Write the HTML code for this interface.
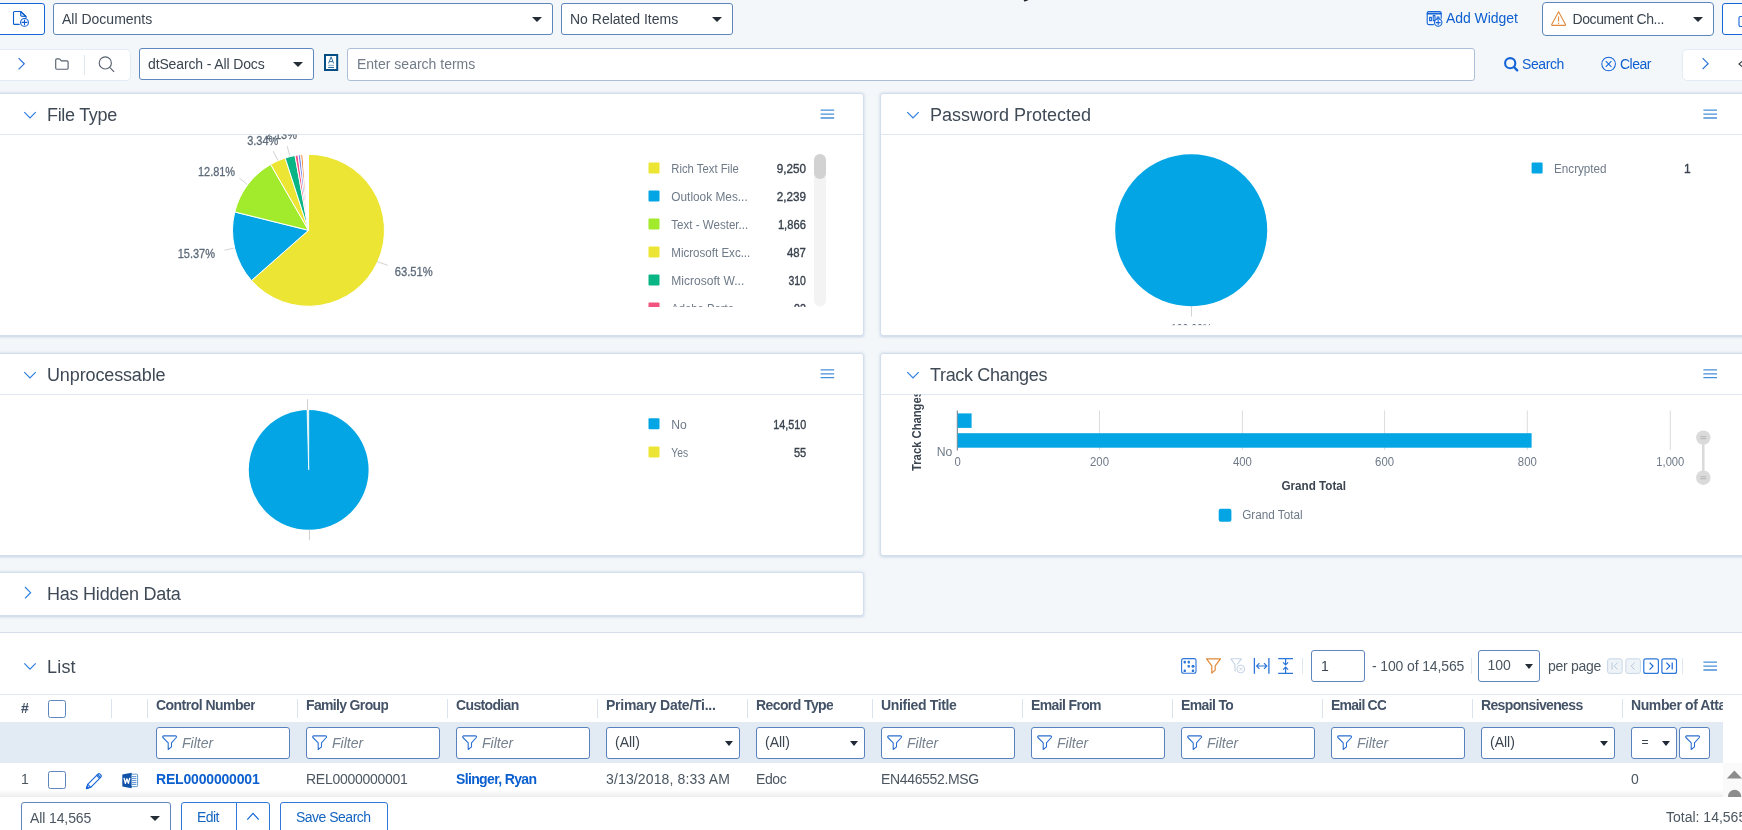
<!DOCTYPE html>
<html>
<head>
<meta charset="utf-8">
<title>Documents</title>
<style>
*{box-sizing:border-box;margin:0;padding:0}
html,body{width:1742px;height:830px;overflow:hidden;background:#f3f7fa;font-family:"Liberation Sans",sans-serif;font-size:14px;color:#3b4550}
.a{position:absolute}
.sel{position:absolute;background:#fff;border:1px solid #5c86bc;border-radius:3px;height:32px;line-height:30px;padding-left:8px;white-space:nowrap;overflow:hidden;color:#3b4550}
.sel .car{position:absolute;top:13px;width:0;height:0;border-left:5px solid transparent;border-right:5px solid transparent;border-top:5px solid #242c36}
.lnk{color:#1565c0}
.w{position:absolute;background:#fff;border:1px solid #d3dfec;border-radius:3px;box-shadow:0 .5px 3px rgba(90,125,170,.3)}
.w .hd{position:absolute;left:0;right:0;top:0;height:41px;border-bottom:1px solid #dfe8f1}
.ttl{position:absolute;font-size:18px;line-height:22px;color:#3f4a56;white-space:nowrap}
.ct{position:absolute;font-size:11.6px;color:#6e7a88;white-space:nowrap;line-height:14px}
.cv{position:absolute;font-size:12px;color:#39424d;white-space:nowrap;line-height:14px;text-align:right}
.sq{position:absolute;width:11px;height:11px;border-radius:1px}
.th{position:absolute;top:697px;font-weight:700;font-size:14px;line-height:16px;color:#435266;white-space:nowrap;overflow:hidden}
.dv{position:absolute;top:699px;width:1px;height:19px;background:#dbe4ee}
.fi{position:absolute;top:727px;height:32px;background:#fff;border:1px solid #5882bd;border-radius:3px;line-height:30px;white-space:nowrap;overflow:hidden}
.fi i{position:absolute;left:25px;top:0;font-style:italic;color:#76828f;font-size:14px}
.fi svg{position:absolute;left:5px;top:7px}
.fs{position:absolute;top:727px;height:32px;background:#fff;border:1px solid #5882bd;border-radius:3px;line-height:29px;padding-left:8px;white-space:nowrap;color:#3b4550}
.fs .car{position:absolute;top:13px;width:0;height:0;border-left:4px solid transparent;border-right:4px solid transparent;border-top:5px solid #1f2a36}
.td{position:absolute;top:771px;font-size:14px;line-height:16px;white-space:nowrap;color:#4b5661}
.btn{position:absolute;background:#fff;border:1px solid #2f78d8;border-radius:3px;color:#1565c0;text-align:center;white-space:nowrap}
</style>
</head>
<body>
<div id="root" style="position:absolute;left:0;top:0;width:1742px;height:830px;overflow:hidden;will-change:transform;background:#f3f7fa">
<!-- ===== top row ===== -->
<div class="a" style="left:-6px;top:3px;width:51px;height:32px;background:#fff;border:1px solid #1565d8;border-radius:3px"></div>
<svg class="a" style="left:12px;top:10px" width="18" height="18" viewBox="0 0 18 18" fill="none" stroke="#0b5fcf" stroke-width="1.1" stroke-linejoin="round" stroke-linecap="round"><path d="M7.200 14.400H2.500a1 1 0 0 1-1-1V2.500a1 1 0 0 1 1-1h6.300l5.200 5v1.300"/><path d="M8.700 1.700v3.300a1.200 1.200 0 0 0 1.200 1.200l4 .200z" fill="#8fb6ea" fill-opacity=".35"/><circle cx="12.500" cy="12.400" r="3.900"/><path d="M12.500 10.100v4.600M10.200 12.400h4.600"/></svg>

<div class="sel" style="left:53px;top:3px;width:500px">All Documents<span class="car" style="left:478px"></span></div>
<div class="sel" style="left:561px;top:3px;width:172px">No Related Items<span class="car" style="left:150px"></span></div>


<div class="sel" style="left:1542px;top:1.500px;width:172px;height:34px;line-height:32px;padding-left:29.500px;letter-spacing:-.41px;border-radius:4px">Document Ch...<span class="car" style="left:150px;top:14px"></span></div>
<div class="a" style="left:1722px;top:3px;width:40px;height:32px;background:#fff;border:1px solid #1565d8;border-radius:3px"></div>

<!-- ===== row 2 ===== -->
<div class="a" style="left:-5px;top:49px;width:135.500px;height:31.500px;background:#fff;border:1px solid #e3ebf4;border-radius:5px"></div>
<div class="sel" style="left:139px;top:48px;width:175px;letter-spacing:-.13px">dtSearch - All Docs<span class="car" style="left:153px"></span></div>
<div class="sel" style="left:347px;top:48px;width:1128px;height:32.500px;border-color:#aec0d9;color:#727c88;padding-left:9px">Enter search terms</div>
<div class="a" style="left:1681.500px;top:49px;width:70px;height:31.500px;background:#fff;border:1px solid #e3ebf4;border-radius:5px"></div>

<!-- ===== widgets ===== -->
<div class="w" style="left:-5px;top:93px;width:869px;height:243px"><div class="hd"></div></div>
<div class="w" style="left:880px;top:93px;width:880px;height:243px"><div class="hd"></div></div>
<div class="w" style="left:-5px;top:353px;width:869px;height:203px"><div class="hd"></div></div>
<div class="w" style="left:880px;top:353px;width:880px;height:203px"><div class="hd"></div></div>
<div class="w" style="left:-5px;top:572px;width:869px;height:44px"></div>

<div class="ttl" style="left:47px;top:104px;letter-spacing:-.31px">File Type</div>
<div class="ttl" style="left:930px;top:104px">Password Protected</div>
<div class="ttl" style="left:47px;top:363.500px;letter-spacing:-.13px">Unprocessable</div>
<div class="ttl" style="left:930px;top:363.500px;letter-spacing:-.33px">Track Changes</div>
<div class="ttl" style="left:47px;top:583px;letter-spacing:-.23px">Has Hidden Data</div>

<!--CHARTS-->
<svg class="a" style="left:0;top:0" width="1742" height="830" viewBox="0 0 1742 830" font-family="Liberation Sans, sans-serif">
<defs><clipPath id="c1"><rect x="0" y="134.6" width="863" height="200"/></clipPath><clipPath id="c1l"><rect x="640" y="150" width="200" height="157"/></clipPath><clipPath id="c2"><rect x="881" y="134.6" width="870" height="190.6"/></clipPath><clipPath id="c3"><rect x="0" y="394.6" width="863" height="150"/></clipPath><clipPath id="c4"><rect x="881" y="394.6" width="870" height="160"/></clipPath></defs>
<g clip-path="url(#c1)">
<g stroke="#fff" stroke-width="1" stroke-linejoin="round">
<path d="M308.5 230.3L308.50 154.30A76 76 0 1 1 251.47 280.53Z" fill="#ece534"/>
<path d="M308.5 230.3L251.47 280.53A76 76 0 0 1 234.75 211.95Z" fill="#03a5e4"/>
<path d="M308.5 230.3L234.75 211.95A76 76 0 0 1 270.61 164.42Z" fill="#a1ea2c"/>
<path d="M308.5 230.3L270.61 164.42A76 76 0 0 1 285.18 157.97Z" fill="#ece534"/>
<path d="M308.5 230.3L285.18 157.97A76 76 0 0 1 295.03 155.50Z" fill="#09b584"/>
<path d="M308.5 230.3L295.03 155.50A76 76 0 0 1 298.04 155.02Z" fill="#f2547d"/>
<path d="M308.5 230.3L298.04 155.02A76 76 0 0 1 300.65 154.71Z" fill="#7b8cf0"/>
<path d="M308.5 230.3L300.65 154.71A76 76 0 0 1 302.93 154.50Z" fill="#f58a42"/>
<path d="M308.5 230.3L302.93 154.50A76 76 0 0 1 304.89 154.39Z" fill="#fff"/>
<path d="M308.5 230.3L304.89 154.39A76 76 0 0 1 306.53 154.33Z" fill="#fff"/>
<path d="M308.5 230.3L306.53 154.33A76 76 0 0 1 307.52 154.31Z" fill="#fff"/>
<path d="M308.5 230.3L307.52 154.31A76 76 0 0 1 308.50 154.30Z" fill="#fff"/>
</g>
<g stroke="#d4d4d4" stroke-width="1" fill="none"><path d="M377.4 261.7L387.7 265.3"/><path d="M233.6 248.2L224.4 250.3"/><path d="M247 184.3L239.4 178.1"/><path d="M278 160.4L273.1 151.1"/><path d="M289.8 155.7L287.2 146.2"/></g>
<g font-size="13" fill="#5d6a79" stroke="#5d6a79" stroke-width=".3">
<text x="265.8" y="138.6" textLength="31.1" lengthAdjust="spacingAndGlyphs">2.13%</text>
<text x="247.2" y="145" textLength="31.1" lengthAdjust="spacingAndGlyphs">3.34%</text>
<text x="198" y="176" textLength="37.1" lengthAdjust="spacingAndGlyphs">12.81%</text>
<text x="177.7" y="258.3" textLength="37.3" lengthAdjust="spacingAndGlyphs">15.37%</text>
<text x="394.8" y="276" textLength="38" lengthAdjust="spacingAndGlyphs">63.51%</text>
</g></g>
<rect x="814" y="154" width="12" height="152.5" rx="6" fill="#f3f3f3"/><rect x="814" y="154" width="12" height="25" rx="6" fill="#d2d2d2"/>
<g clip-path="url(#c1l)">
<rect x="648.5" y="162.4" width="11" height="11" rx="1" fill="#ece534"/>
<text x="671.3" y="172.7" font-size="12" fill="#6e7a88" textLength="67.6" lengthAdjust="spacingAndGlyphs">Rich Text File</text>
<text x="776.7" y="172.7" font-size="12" fill="#39424d" stroke="#39424d" stroke-width=".35" textLength="29.2" lengthAdjust="spacingAndGlyphs">9,250</text>
<rect x="648.5" y="190.4" width="11" height="11" rx="1" fill="#03a5e4"/>
<text x="671.3" y="200.7" font-size="12" fill="#6e7a88" textLength="76.4" lengthAdjust="spacingAndGlyphs">Outlook Mes...</text>
<text x="776.7" y="200.7" font-size="12" fill="#39424d" stroke="#39424d" stroke-width=".35" textLength="29.2" lengthAdjust="spacingAndGlyphs">2,239</text>
<rect x="648.5" y="218.4" width="11" height="11" rx="1" fill="#a1ea2c"/>
<text x="671.3" y="228.7" font-size="12" fill="#6e7a88" textLength="76.9" lengthAdjust="spacingAndGlyphs">Text - Wester...</text>
<text x="777.9" y="228.7" font-size="12" fill="#39424d" stroke="#39424d" stroke-width=".35" textLength="28" lengthAdjust="spacingAndGlyphs">1,866</text>
<rect x="648.5" y="246.4" width="11" height="11" rx="1" fill="#ece534"/>
<text x="671.3" y="256.7" font-size="12" fill="#6e7a88" textLength="79" lengthAdjust="spacingAndGlyphs">Microsoft Exc...</text>
<text x="786.9" y="256.7" font-size="12" fill="#39424d" stroke="#39424d" stroke-width=".35" textLength="19" lengthAdjust="spacingAndGlyphs">487</text>
<rect x="648.5" y="274.4" width="11" height="11" rx="1" fill="#09b584"/>
<text x="671.3" y="284.7" font-size="12" fill="#6e7a88" textLength="73" lengthAdjust="spacingAndGlyphs">Microsoft W...</text>
<text x="788.4" y="284.7" font-size="12" fill="#39424d" stroke="#39424d" stroke-width=".35" textLength="17.5" lengthAdjust="spacingAndGlyphs">310</text>
<rect x="648.5" y="302.4" width="11" height="11" rx="1" fill="#f2547d"/>
<text x="671.3" y="312.7" font-size="12" fill="#6e7a88" textLength="72" lengthAdjust="spacingAndGlyphs">Adobe Porta...</text>
<text x="793.9" y="312.7" font-size="12" fill="#39424d" stroke="#39424d" stroke-width=".35" textLength="12" lengthAdjust="spacingAndGlyphs">93</text>
</g>
<g clip-path="url(#c2)">
<circle cx="1191.2" cy="230.2" r="76" fill="#03a5e4"/>
<path d="M1191.5 306L1191.5 316.5" stroke="#d4d4d4" stroke-width="1"/>
<text x="1171" y="333" font-size="13" fill="#5d6a79" textLength="41" lengthAdjust="spacingAndGlyphs">100.00%</text>
</g>
<rect x="1531.6" y="162.5" width="11" height="11" rx="1" fill="#03a5e4"/>
<text x="1554" y="172.8" font-size="12" fill="#6e7a88" textLength="52.6" lengthAdjust="spacingAndGlyphs">Encrypted</text>
<text x="1684" y="172.8" font-size="12" fill="#39424d" stroke="#39424d" stroke-width=".35">1</text>
<g clip-path="url(#c3)">
<circle cx="308.7" cy="469.8" r="59.9" fill="#03a5e4"/>
<path d="M308.7 469.8L307.1 409.9L308.7 409.9Z" fill="#fbf9d8" stroke="#fff" stroke-width=".8"/>
<path d="M307.5 399.2V409.9M309.5 529.7V540.2" stroke="#d0d0d0" stroke-width="1"/>
</g>
<rect x="648.5" y="418.3" width="11" height="11" rx="1" fill="#03a5e4"/>
<text x="671.3" y="428.6" font-size="12" fill="#6e7a88" textLength="15.5" lengthAdjust="spacingAndGlyphs">No</text>
<text x="773.2" y="428.6" font-size="12" fill="#39424d" stroke="#39424d" stroke-width=".35" textLength="33" lengthAdjust="spacingAndGlyphs">14,510</text>
<rect x="648.5" y="446.4" width="11" height="11" rx="1" fill="#ece534"/>
<text x="671.3" y="456.7" font-size="12" fill="#6e7a88" textLength="16.8" lengthAdjust="spacingAndGlyphs">Yes</text>
<text x="793.9" y="456.7" font-size="12" fill="#39424d" stroke="#39424d" stroke-width=".35" textLength="12.3" lengthAdjust="spacingAndGlyphs">55</text>
<g clip-path="url(#c4)">
<g stroke="#dcdcdc" stroke-width="1"><path d="M1099.5 410.5V450"/><path d="M1242.4 410.5V450"/><path d="M1384.6 410.5V450"/><path d="M1527.3 410.5V450"/><path d="M1670.3 410.5V450"/></g>
<path d="M957.3 410.5V450.5" stroke="#6b7785" stroke-width="1"/>
<rect x="957.8" y="413.4" width="13.8" height="14.5" fill="#03a5e4"/><rect x="957.8" y="433.2" width="573.8" height="14.5" fill="#03a5e4"/>
<g font-size="12" fill="#6e7a88">
<text x="936.8" y="455.6" textLength="15.6" lengthAdjust="spacingAndGlyphs">No</text>
<text x="954.5" y="465.8" textLength="6.3" lengthAdjust="spacingAndGlyphs">0</text>
<text x="1090.0" y="465.8" textLength="19" lengthAdjust="spacingAndGlyphs">200</text>
<text x="1232.9" y="465.8" textLength="19" lengthAdjust="spacingAndGlyphs">400</text>
<text x="1375.1" y="465.8" textLength="19" lengthAdjust="spacingAndGlyphs">600</text>
<text x="1517.8" y="465.8" textLength="19" lengthAdjust="spacingAndGlyphs">800</text>
<text x="1656.3" y="465.8" textLength="28" lengthAdjust="spacingAndGlyphs">1,000</text>
</g>
<text x="1281.5" y="490.3" font-size="12" font-weight="700" fill="#3b4550" textLength="64.6" lengthAdjust="spacingAndGlyphs">Grand Total</text>
<text transform="translate(921 471) rotate(-90)" font-size="12" font-weight="700" fill="#3b4550" textLength="80" lengthAdjust="spacingAndGlyphs">Track Changes</text>
<rect x="1218.7" y="508.8" width="12.7" height="13" rx="2" fill="#03a5e4"/>
<text x="1242.2" y="519.4" font-size="12" fill="#6e7a88" textLength="60.4" lengthAdjust="spacingAndGlyphs">Grand Total</text>
<path d="M1703.3 437.6V477.7" stroke="#dadada" stroke-width="2.5"/><circle cx="1703.3" cy="437.6" r="7.2" fill="#dadada"/><circle cx="1703.3" cy="477.7" r="7.2" fill="#dadada"/>
<path d="M1700.3 436.7h6M1700.3 438.7h6M1700.3 476.8h6M1700.3 478.8h6" stroke="#b5b5b5" stroke-width="1"/>
</g>
</svg>
<!--/CHARTS-->
<!--TOP-->
<!-- top / header icons overlay -->
<svg class="a" style="left:0;top:0" width="1742" height="620" viewBox="0 0 1742 620" fill="none">
 <path d="M1023.600 -1l1.300 2 3.600-1.400" stroke="#fff" stroke-width="3" stroke-linecap="round"/><path d="M1023.600 -1l1.300 1.900 3.600-1.400" stroke="#1e2430" stroke-width="1.300" stroke-linecap="round"/>
 <!-- add widget icon -->
 <g stroke="#1565d8" stroke-width="1.1" stroke-linejoin="round" stroke-linecap="round">
  <path d="M1433.4 24.6h-4.6a1.6 1.6 0 0 1-1.6-1.6V13.2a1.6 1.6 0 0 1 1.6-1.6h10.8a1.6 1.6 0 0 1 1.6 1.6v5"/>
  <path d="M1427.4 13.6h13.6" stroke-width="1.6"/>
  <rect x="1429.6" y="17.4" width="1.8" height="3.2"/><rect x="1433.2" y="15.6" width="1.8" height="5"/><path d="M1437.2 20.4v-3.4h1.8v1.4"/>
  <circle cx="1438.2" cy="22.6" r="3.7" fill="#f3f7fa"/><path d="M1438.2 20.6v4M1436.2 22.6h4"/>
 </g>
 <!-- warning triangle -->
 <path d="M1558.6 11.8l6.9 12.6a.7.7 0 0 1-.6 1h-12.6a.7.7 0 0 1-.6-1z" stroke="#e08a3c" stroke-width="1.1" stroke-linejoin="round"/>
 <path d="M1558.6 16.4v5" stroke="#e08a3c" stroke-width="1.1"/><circle cx="1558.6" cy="23.2" r=".7" fill="#e08a3c"/>
 <!-- right partial button icon -->
 <path d="M1745 16.5h-4.5a1.5 1.5 0 0 0-1.5 1.5v7a1.5 1.5 0 0 0 1.5 1.5h4.5" stroke="#1565d8" stroke-width="1.1"/>
 <!-- row2 left: chevron, folder, divider, search -->
 <path d="M18.6 58.2l5.6 5.6-5.6 5.6" stroke="#2b6fd8" stroke-width="1.2"/>
 <path d="M55.7 60v8a1.2 1.2 0 0 0 1.2 1.2h10a1.2 1.2 0 0 0 1.2-1.2v-5.9a1.2 1.2 0 0 0-1.2-1.2h-5.6l-1.5-1.8a1 1 0 0 0-.8-.3h-2.100a1.200 1.200 0 0 0-1.200 1.200z" stroke="#59626e" stroke-width="1.15" stroke-linejoin="round"/>
 <path d="M84.400 55v20" stroke="#dde5ee" stroke-width="1"/>
 <circle cx="105.3" cy="62.9" r="6.1" stroke="#59626e" stroke-width="1.15"/><path d="M109.700 67.400l4.400 4.400" stroke="#59626e" stroke-width="1.15"/>
 <!-- dtSearch icon -->
 <rect x="325" y="55" width="12.200" height="15" fill="#fff" stroke="#054d85" stroke-width="2"/>
 <path d="M328.600 63.400l2.500-6.600 2.500 6.600M329.500 61.600h3.200" stroke="#2f6f9f" stroke-width="1"/>
 <path d="M328.200 65.300h5.800" stroke="#7fa5c2" stroke-width="1"/><path d="M328.200 67.500h5.800" stroke="#2f6f9f" stroke-width="1.100"/>
 <!-- Search bold magnifier -->
 <circle cx="1510.200" cy="63.200" r="5.100" stroke="#1565d8" stroke-width="2.100"/><path d="M1513.900 67l3.300 3.300" stroke="#1565d8" stroke-width="2.400" stroke-linecap="round"/>
 <!-- Clear icon -->
 <circle cx="1608.600" cy="64" r="6.800" stroke="#1565d8" stroke-width="1.050"/><path d="M1605.800 61.200l5.600 5.600M1611.400 61.200l-5.600 5.600" stroke="#1565d8" stroke-width="1.050"/>
 <!-- row2 right chevron + partial -->
 <path d="M1702.600 58.200l5.500 5.500-5.500 5.500" stroke="#2b6fd8" stroke-width="1.200"/>
 <path d="M1744 60l-5 4 5 4" stroke="#3b4550" stroke-width="1.200"/>
 <!-- widget chevrons -->
 <g stroke="#2b7de0" stroke-width="1.200">
  <path d="M24.300 112.100l5.700 5.700 5.700-5.700"/><path d="M907.300 112.100l5.700 5.700 5.700-5.700"/>
  <path d="M24.300 372.100l5.700 5.700 5.700-5.700"/><path d="M907.300 372.100l5.700 5.700 5.700-5.700"/>
  <path d="M25 587l5.600 5.700-5.600 5.700"/>
 </g>
 <!-- widget hamburgers -->
 <g stroke="#4a90d9" stroke-width="1.300">
  <path d="M820.600 110.200h13.600M820.600 114.100h13.600M820.600 118h13.600"/>
  <path d="M1703.400 110.200h13.600M1703.400 114.100h13.600M1703.400 118h13.600"/>
  <path d="M820.600 369.900h13.600M820.600 373.800h13.600M820.600 377.700h13.600"/>
  <path d="M1703.400 369.900h13.600M1703.400 373.800h13.600M1703.400 377.700h13.600"/>
 </g>
</svg>
<div class="a lnk" style="left:1446px;top:10px;line-height:16px;white-space:nowrap;letter-spacing:-.05px;color:#0e5fcf">Add Widget</div>
<div class="a lnk" style="left:1522px;top:56px;line-height:16px;white-space:nowrap;letter-spacing:-.39px;color:#0e5fcf">Search</div>
<div class="a lnk" style="left:1620px;top:56px;line-height:16px;white-space:nowrap;letter-spacing:-.52px;color:#0e5fcf">Clear</div>
<!--/TOP-->
<!-- ===== list ===== -->
<div class="a" style="left:0;top:632px;width:1742px;height:198px;background:#fff;border-top:1px solid #d4dfeb"></div>
<div class="ttl" style="left:47px;top:656px;letter-spacing:.19px">List</div>

<!--LIST-->
<!-- list toolbar -->
<svg class="a" style="left:0;top:632px" width="1742" height="64" viewBox="0 632 1742 64" fill="none">
 <!-- chevron -->
 <path d="M24.3 663.4l5.7 5.7 5.7-5.7" stroke="#2b7de0" stroke-width="1.2"/>
 <!-- grid icon -->
 <rect x="1181.6" y="658.6" width="14.4" height="14.6" rx="2" stroke="#2b76d9" stroke-width="1.1"/>
 <g fill="#2b76d9"><rect x="1183.6" y="660.8" width="2.3" height="2.6" rx=".6"/><rect x="1187.6" y="660.8" width="2.3" height="2.6" rx=".6"/><rect x="1187.6" y="665" width="2.3" height="2.6" rx=".6"/><circle cx="1193" cy="666.3" r="1.5"/><rect x="1183.6" y="669.4" width="2.3" height="2.6" rx=".6"/><rect x="1191.8" y="669.4" width="2.3" height="2.6" rx=".6"/></g>
 <!-- orange funnel -->
 <path d="M1206.6 658.8h13.9l-5.3 7.1v4.2l-3.4 2.9v-7.1z" stroke="#e08a3c" stroke-width="1.2" stroke-linejoin="round"/>
 <!-- grey funnel + x -->
 <path d="M1230.8 658.8h10.6l-4.2 5.6M1230.8 658.8l4.2 5.6v6.2l1 .8" stroke="#c6d4e5" stroke-width="1.1" stroke-linejoin="round"/>
 <circle cx="1240.8" cy="669" r="3.9" stroke="#c6d4e5" stroke-width="1"/><path d="M1239.2 667.4l3.2 3.2M1242.4 667.4l-3.2 3.2" stroke="#c6d4e5" stroke-width=".9"/>
 <!-- width icon -->
 <path d="M1254.4 658v15.8M1268.9 658v15.8" stroke="#2b76d9" stroke-width="1.3"/><path d="M1257 666h9.4M1259.4 663.2l-2.8 2.8 2.8 2.8M1264 663.2l2.8 2.8-2.8 2.8" stroke="#2b76d9" stroke-width="1.2"/>
 <!-- height icon -->
 <path d="M1278.2 658.6h14.8M1278.2 673.4h14.8" stroke="#2b76d9" stroke-width="1.3"/><path d="M1285.6 659v5.6M1283.1 662.4l2.5 2.5 2.5-2.5M1285.6 673v-5.6M1283.1 669.6l2.5-2.5 2.5 2.5" stroke="#2b76d9" stroke-width="1.2"/>
 <!-- dividers -->
 <path d="M1302.5 658v16M1471.5 658v16M1682.5 658v16" stroke="#dfe7f0" stroke-width="1"/>
 <!-- pager -->
 <rect x="1607.6" y="658.8" width="14.6" height="14.6" rx="2" fill="#eef3f8" stroke="#c9d7e7"/>
 <path d="M1612 662.6v7M1617.6 662.6l-3.4 3.5 3.4 3.5" stroke="#b9c9dc" stroke-width="1"/>
 <rect x="1625.8" y="658.8" width="14.6" height="14.6" rx="2" fill="#eef3f8" stroke="#c9d7e7"/>
 <path d="M1634.6 662.6l-3.4 3.5 3.4 3.5" stroke="#b9c9dc" stroke-width="1"/>
 <rect x="1643.8" y="658.8" width="14.6" height="14.6" rx="2" fill="#fff" stroke="#2b76d9" stroke-width="1.2"/>
 <path d="M1649.6 662.6l3.4 3.5-3.4 3.5" stroke="#1565d8" stroke-width="1.2"/>
 <rect x="1661.9" y="658.8" width="14.6" height="14.6" rx="2" fill="#fff" stroke="#2b76d9" stroke-width="1.2"/>
 <path d="M1666.4 662.6l3.4 3.5-3.4 3.5M1672.2 662.6v7" stroke="#1565d8" stroke-width="1.2"/>
 <!-- hamburger -->
 <path d="M1703.4 662.2h13.6M1703.4 666.1h13.6M1703.4 670h13.6" stroke="#4a90d9" stroke-width="1.3"/>
</svg>
<div class="sel" style="left:1311px;top:650px;width:54px;padding-left:9px">1</div>
<div class="a" style="left:1372px;top:658px;line-height:16px;white-space:nowrap;color:#4b5661;letter-spacing:-.13px">- 100 of 14,565</div>
<div class="sel" style="left:1478px;top:650px;width:62px;padding-left:8.500px;line-height:29px;color:#4b5661">100<span class="car" style="left:46px;top:13px;border-left-width:4px;border-right-width:4px;border-top-width:5px"></span></div>
<div class="a" style="left:1548px;top:658px;line-height:16px;white-space:nowrap;color:#4b5661;letter-spacing:-.27px">per page</div>

<!-- table header -->
<div class="a" style="left:0;top:694px;width:1742px;height:1px;background:#e0e8f1"></div>
<div class="a" style="left:0;top:722px;width:1723px;height:41px;background:#e2eaf4"></div>
<div class="th" style="left:21px;top:700px;letter-spacing:0">#</div>
<div class="a" style="left:48px;top:700px;width:18px;height:18px;border:1px solid #5c86bc;border-radius:2.500px;background:#fff"></div>
<div class="dv" style="left:111px"></div><div class="dv" style="left:147px"></div><div class="dv" style="left:297px"></div><div class="dv" style="left:447px"></div><div class="dv" style="left:597px"></div><div class="dv" style="left:747px"></div><div class="dv" style="left:872px"></div><div class="dv" style="left:1022px"></div><div class="dv" style="left:1172px"></div><div class="dv" style="left:1322px"></div><div class="dv" style="left:1472px"></div><div class="dv" style="left:1622px"></div>
<div class="th" style="left:156px;letter-spacing:-0.53px">Control Number</div>
<div class="th" style="left:306px;letter-spacing:-0.66px">Family Group</div>
<div class="th" style="left:456px;letter-spacing:-0.64px">Custodian</div>
<div class="th" style="left:606px;letter-spacing:-0.25px">Primary Date/Ti...</div>
<div class="th" style="left:756px;letter-spacing:-0.59px">Record Type</div>
<div class="th" style="left:881px;letter-spacing:-0.33px">Unified Title</div>
<div class="th" style="left:1031px;letter-spacing:-0.63px">Email From</div>
<div class="th" style="left:1181px;letter-spacing:-0.64px">Email To</div>
<div class="th" style="left:1331px;letter-spacing:-0.77px">Email CC</div>
<div class="th" style="left:1481px;letter-spacing:-0.64px">Responsiveness</div>
<div class="th" style="left:1631px;width:92px;letter-spacing:-.4px">Number of Attachments</div>

<!-- filter row -->
<div class="fi" style="left:156px;width:134px"><svg width="16" height="16" viewBox="0 0 16 16" fill="none" stroke="#2b6fd0" stroke-width="1.1" stroke-linejoin="round"><path d="M1.700 .900h11.800a1 1 0 0 1 .800 1.600L9.500 7.800v4.100l-3.300 2.600V7.800L.900 2.500a1 1 0 0 1 .800-1.600z"/></svg><i>Filter</i></div>
<div class="fi" style="left:306px;width:134px"><svg width="16" height="16" viewBox="0 0 16 16" fill="none" stroke="#2b6fd0" stroke-width="1.1" stroke-linejoin="round"><path d="M1.700 .900h11.800a1 1 0 0 1 .800 1.600L9.500 7.800v4.100l-3.300 2.600V7.800L.900 2.500a1 1 0 0 1 .800-1.600z"/></svg><i>Filter</i></div>
<div class="fi" style="left:456px;width:134px"><svg width="16" height="16" viewBox="0 0 16 16" fill="none" stroke="#2b6fd0" stroke-width="1.1" stroke-linejoin="round"><path d="M1.700 .900h11.800a1 1 0 0 1 .800 1.600L9.500 7.800v4.100l-3.300 2.600V7.800L.900 2.500a1 1 0 0 1 .800-1.600z"/></svg><i>Filter</i></div>
<div class="fs" style="left:606px;width:134px">(All)<span class="car" style="left:118px"></span></div>
<div class="fs" style="left:756px;width:109px">(All)<span class="car" style="left:93px"></span></div>
<div class="fi" style="left:881px;width:134px"><svg width="16" height="16" viewBox="0 0 16 16" fill="none" stroke="#2b6fd0" stroke-width="1.1" stroke-linejoin="round"><path d="M1.700 .900h11.800a1 1 0 0 1 .800 1.600L9.500 7.800v4.100l-3.300 2.600V7.800L.900 2.500a1 1 0 0 1 .800-1.600z"/></svg><i>Filter</i></div>
<div class="fi" style="left:1031px;width:134px"><svg width="16" height="16" viewBox="0 0 16 16" fill="none" stroke="#2b6fd0" stroke-width="1.1" stroke-linejoin="round"><path d="M1.700 .900h11.800a1 1 0 0 1 .800 1.600L9.500 7.800v4.100l-3.300 2.600V7.800L.900 2.500a1 1 0 0 1 .800-1.600z"/></svg><i>Filter</i></div>
<div class="fi" style="left:1181px;width:134px"><svg width="16" height="16" viewBox="0 0 16 16" fill="none" stroke="#2b6fd0" stroke-width="1.1" stroke-linejoin="round"><path d="M1.700 .900h11.800a1 1 0 0 1 .800 1.600L9.500 7.800v4.100l-3.300 2.600V7.800L.900 2.500a1 1 0 0 1 .800-1.600z"/></svg><i>Filter</i></div>
<div class="fi" style="left:1331px;width:134px"><svg width="16" height="16" viewBox="0 0 16 16" fill="none" stroke="#2b6fd0" stroke-width="1.1" stroke-linejoin="round"><path d="M1.700 .900h11.800a1 1 0 0 1 .800 1.600L9.500 7.800v4.100l-3.300 2.600V7.800L.900 2.500a1 1 0 0 1 .800-1.600z"/></svg><i>Filter</i></div>
<div class="fs" style="left:1481px;width:134px">(All)<span class="car" style="left:118px"></span></div>
<div class="fs" style="left:1631px;width:46px;padding-left:9.500px;font-size:12px">=<span class="car" style="left:30px"></span></div>
<div class="fi" style="left:1679px;width:31px"><svg style="left:5.200px" width="16" height="16" viewBox="0 0 16 16" fill="none" stroke="#2b6fd0" stroke-width="1.1" stroke-linejoin="round"><path d="M1.700 .900h11.800a1 1 0 0 1 .800 1.600L9.500 7.800v4.100l-3.300 2.600V7.800L.900 2.500a1 1 0 0 1 .800-1.600z"/></svg></div>

<!-- data row -->
<div class="td" style="left:21px">1</div>
<div class="a" style="left:48px;top:771px;width:18px;height:18px;border:1px solid #5c86bc;border-radius:2.500px;background:#fff"></div>
<svg class="a" style="left:85px;top:772px" width="18" height="18" viewBox="0 0 18 18" fill="none" stroke="#1565d8" stroke-width="1.100" stroke-linejoin="round" stroke-linecap="round"><path d="M1.400 16.600l1.300-4.300L12.900 2.100a1.500 1.500 0 0 1 2.100 0l.900.900a1.500 1.500 0 0 1 0 2.100L5.700 15.300z"/><path d="M11.600 3.400l3 3M12.700 2.500l2.800 2.800M2.700 12.300l3 3"/><path d="M1.400 16.600l.700-2.200 1.500 1.500z" fill="#1565d8"/></svg>
<svg class="a" style="left:122px;top:772px" width="17" height="17" viewBox="0 0 17 17"><rect x="7" y="2.200" width="8.600" height="12.400" rx=".8" fill="#fff" stroke="#4f93d0" stroke-width=".9"/><path d="M10 4.600h4.400M10 6.600h4.400M10 8.600h4.400M10 10.600h4.400M10 12.400h4.400" stroke="#3a7cc8" stroke-width=".85"/><path d="M.300 2.400L9.600.800v15.400L.300 14.600z" fill="#0f52a8"/><path d="M2 5.800l1.400 5.600 1.500-4.600 1.500 4.600 1.400-5.600" fill="none" stroke="#fff" stroke-width="1.350" stroke-linejoin="round"/></svg>
<div class="td" style="left:156px;font-weight:700;color:#0b5fcf;letter-spacing:-.18px">REL0000000001</div>
<div class="td" style="left:306px;letter-spacing:-.28px">REL0000000001</div>
<div class="td" style="left:456px;font-weight:700;color:#0b5fcf;letter-spacing:-.64px">Slinger, Ryan</div>
<div class="td" style="left:606px;letter-spacing:.14px">3/13/2018, 8:33 AM</div>
<div class="td" style="left:756px;letter-spacing:-.4px">Edoc</div>
<div class="td" style="left:881px;letter-spacing:-.34px">EN446552.MSG</div>
<div class="td" style="left:1631px">0</div>
<!-- bottom bar -->
<div class="a" style="left:0;top:789.500px;width:1742px;height:7.500px;background:linear-gradient(rgba(255,255,255,0),#ededed)"></div>
<!-- table scrollbar -->
<div class="a" style="left:1723px;top:763px;width:19px;height:34px;background:#fafafa"></div>
<svg class="a" style="left:1723px;top:763px" width="19" height="34" viewBox="0 0 19 34"><path d="M3.800 15.500l7.600-7.900 7.600 7.900z" fill="#8c8c8c"/><circle cx="11.600" cy="33.400" r="6.600" fill="#8c8c8c"/></svg>
<div class="a" style="left:0;top:797px;width:1742px;height:33px;background:#fff"></div>
<div class="sel" style="left:21px;top:802px;width:150px;padding-left:8px;line-height:31px;color:#4b5661;letter-spacing:-.11px">All 14,565<span class="car" style="left:128px;top:13px"></span></div>
<div class="btn" style="left:181px;top:802px;width:89px;height:34px"></div>
<div class="a" style="left:236px;top:802px;width:1px;height:30px;background:#2f78d8"></div>
<div class="a lnk" style="left:197px;top:809px;line-height:16px;letter-spacing:-.54px">Edit</div>
<svg class="a" style="left:246px;top:811px" width="14" height="10" viewBox="0 0 14 10" fill="none" stroke="#1565d8" stroke-width="1.2"><path d="M1.3 8.6L7 2.4l5.7 6.2"/></svg>
<div class="btn" style="left:280px;top:802px;width:108px;height:34px"></div>
<div class="a lnk" style="left:296px;top:809px;line-height:16px;letter-spacing:-.51px">Save Search</div>
<div class="a" style="left:1666px;top:809px;line-height:16px;white-space:nowrap;color:#4b5661">Total: 14,565</div>
<!--/LIST-->
</div>
</body>
</html>
